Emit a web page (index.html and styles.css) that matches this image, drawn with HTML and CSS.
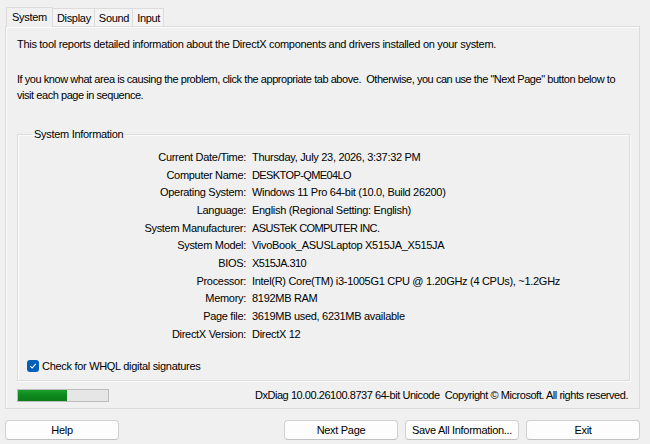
FILE: index.html
```html
<!DOCTYPE html>
<html lang="en">
<head>
    <meta charset="utf-8">
    <title>DirectX Diagnostic Tool</title>
    <link rel="stylesheet" href="styles.css">
</head>
<body>
<div class="window">
    <div class="tabs">
        <div class="tab active">System</div>
        <div class="tab">Display</div>
        <div class="tab">Sound</div>
        <div class="tab">Input</div>
    </div>
    <div class="panel">
        <p class="intro">This tool reports detailed information about the DirectX components and drivers installed on your system.</p>
        <p class="intro second">If you know what area is causing the problem, click the appropriate tab above.&nbsp; Otherwise, you can use the "Next Page" button below to<br>visit each page in sequence.</p>

        <fieldset class="group">
            <legend>System Information</legend>
            <div class="info">
                <span class="label">Current Date/Time:</span><span>Thursday, July 23, 2026, 3:37:32 PM</span>
                <span class="label">Computer Name:</span><span class="caps">DESKTOP-QME04LO</span>
                <span class="label">Operating System:</span><span>Windows 11 Pro 64-bit (10.0, Build 26200)</span>
                <span class="label">Language:</span><span>English (Regional Setting: English)</span>
                <span class="label">System Manufacturer:</span><span class="caps">ASUSTeK COMPUTER INC.</span>
                <span class="label">System Model:</span><span>VivoBook_ASUSLaptop X515JA_X515JA</span>
                <span class="label">BIOS:</span><span class="caps">X515JA.310</span>
                <span class="label">Processor:</span><span>Intel(R) Core(TM) i3-1005G1 CPU @ 1.20GHz (4 CPUs), ~1.2GHz</span>
                <span class="label">Memory:</span><span>8192MB RAM</span>
                <span class="label">Page file:</span><span>3619MB used, 6231MB available</span>
                <span class="label">DirectX Version:</span><span>DirectX 12</span>
            </div>
            <label class="check">
                <span class="box">
                    <svg width="8" height="8" viewBox="0 0 8 8"><path d="M1.2 4.2 L3.1 6 L6.8 1.8" fill="none" stroke="#fff" stroke-width="1.1"/></svg>
                </span>
                Check for WHQL digital signatures
            </label>
        </fieldset>

        <div class="status">
            <div class="progress"><div class="fill" style="width:54%"></div></div>
            <div class="version">DxDiag 10.00.26100.8737 64-bit Unicode&nbsp; Copyright © Microsoft. All rights reserved.</div>
        </div>
    </div>
    <div class="buttons">
        <button class="btn">Help</button>
        <div class="spacer"></div>
        <button class="btn">Next Page</button>
        <button class="btn">Save All Information...</button>
        <button class="btn">Exit</button>
    </div>
</div>
</body>
</html>
```

FILE: styles.css
```css
body {
    margin: 0;
    background: #f0f0f0;
    font-family: "Liberation Sans", Arial, sans-serif;
    font-size: 11px;
    letter-spacing: -0.3px;
    color: #000;
}

.window {
    padding: 6px 10px 0 5px;
}

.tabs {
    display: flex;
    align-items: flex-end;
    height: 20px;
    padding-left: 1px;
}

.tab {
    height: 18px;
    line-height: 18px;
    padding: 0 3px 0 4px;
    border: 1px solid #dcdcdc;
    border-bottom: none;
    border-left: none;
    background: #f4f4f4;
    box-sizing: border-box;
}

.tab.active {
    height: 20px;
    line-height: 19px;
    padding: 0 5px;
    border-left: 1px solid #dcdcdc;
    background: #f0f0f0;
    margin-bottom: -1px;
    position: relative;
}

.panel {
    height: 383px;
    box-sizing: border-box;
    border: 1px solid #dcdcdc;
    box-shadow: inset 1px 1px 0 #fbfbfb;
    padding: 9px 9px 0 11px;
}

.intro {
    margin: 0;
    line-height: 16px;
}

.intro.second {
    margin-top: 19px;
    white-space: nowrap;
    letter-spacing: -0.45px;
}

.group {
    margin: 25px 0 0 0;
    border: 1px solid #dcdcdc;
    box-shadow: inset 1px 1px 0 #fbfbfb, 1px 1px 0 #fbfbfb;
    padding: 8px 0 8px 9px;
}

.group legend {
    padding: 0 2px;
    margin-left: 5px;
}

.info {
    display: grid;
    grid-template-columns: 219px 1fr;
    column-gap: 6px;
    grid-auto-rows: 17.7px;
    align-items: center;
}

.info .label {
    text-align: right;
}

.caps {
    letter-spacing: -0.6px;
}

.check {
    display: flex;
    align-items: center;
    gap: 3px;
    margin-top: 17px;
}

.box {
    width: 12px;
    height: 12px;
    border-radius: 3px;
    background: #005fb8;
    display: flex;
    align-items: center;
    justify-content: center;
}

.box svg {
    display: block;
}

.status {
    display: flex;
    align-items: center;
    justify-content: space-between;
    margin-top: 8px;
    padding-right: 2px;
}

.progress {
    width: 90px;
    height: 11px;
    border: 1px solid #bcbcbc;
    background: #e6e6e6;
}

.fill {
    height: 100%;
    background: linear-gradient(#1c9f2c, #0d8a1d 45%, #0a7b18);
}

.version {
    letter-spacing: -0.45px;
}

.buttons {
    display: flex;
    gap: 7px;
    margin-top: 11px;
}

.spacer {
    flex: 1;
}

.btn {
    width: 114px;
    height: 20px;
    font: inherit;
    letter-spacing: inherit;
    color: #000;
    background: #fdfdfd;
    border: 1px solid #d0d0d0;
    border-bottom-color: #c0c0c0;
    border-radius: 4px;
    padding: 0;
}
```
